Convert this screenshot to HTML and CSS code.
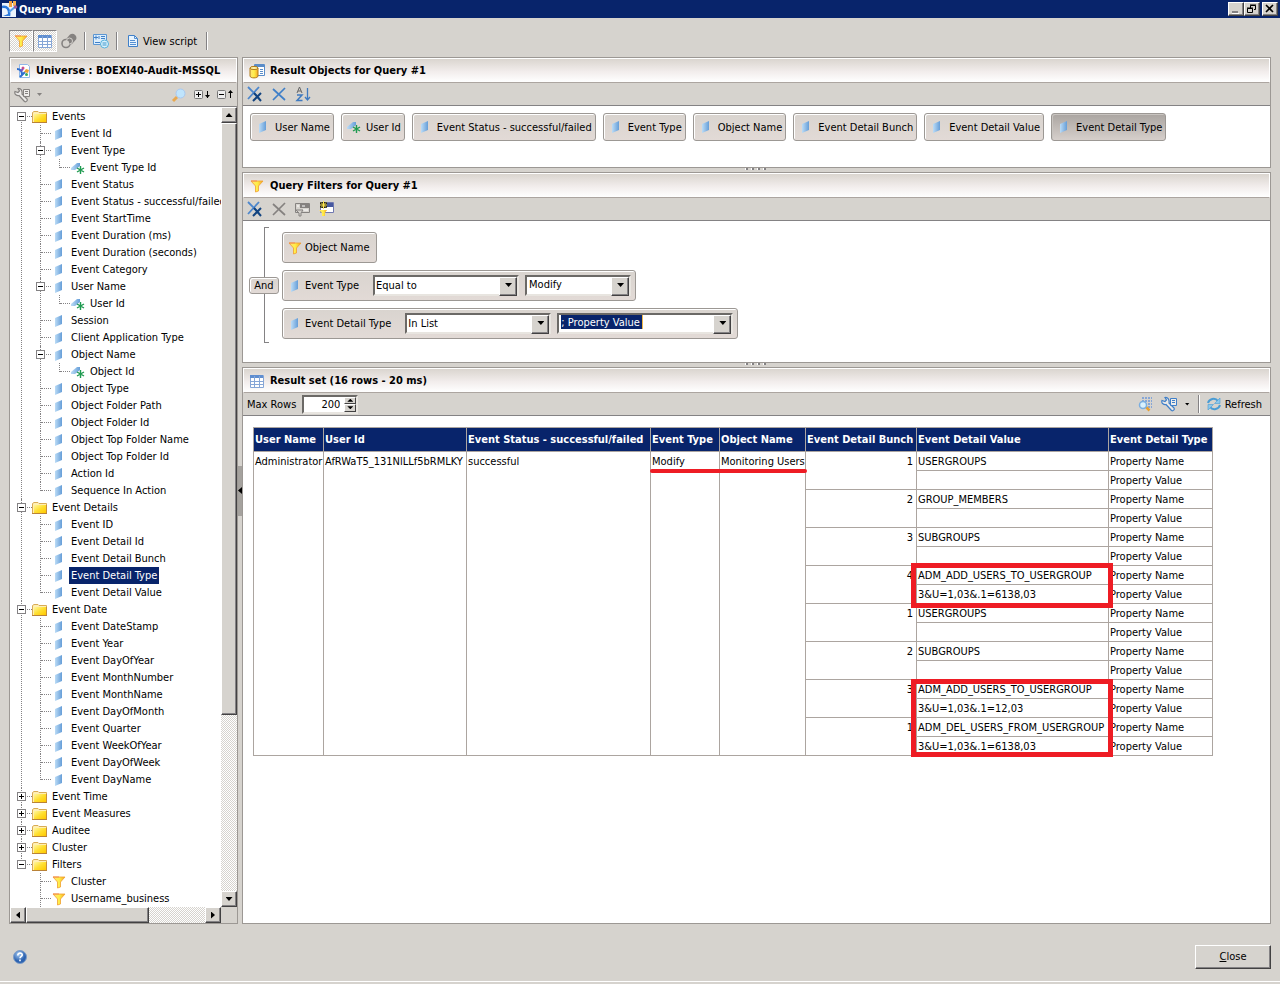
FILE: index.html
```html
<!DOCTYPE html>
<html lang="en">
<head>
  <meta charset="UTF-8" />
  <meta name="viewport" content="width=device-width, initial-scale=1" />
  <title>Query Panel</title>
  <link rel="stylesheet" href="styles.css">
</head>
<body>
  <svg class="sprite" aria-hidden="true">
    <defs>
      <linearGradient id="blue" x1="0" x2="1"><stop offset="0" stop-color="#bcdcf6"/><stop offset="1" stop-color="#669ed8"/></linearGradient>
      <linearGradient id="gold" x1="0" x2="1"><stop offset="0" stop-color="#ffdf78"/><stop offset=".5" stop-color="#fff04a"/><stop offset="1" stop-color="#f5a623"/></linearGradient>
      <linearGradient id="fold" x1="1" y1="1" x2="0" y2="0"><stop offset="0" stop-color="#ffc800"/><stop offset=".5" stop-color="#ffdf30"/><stop offset="1" stop-color="#fff6a0"/></linearGradient>
      <radialGradient id="ball" cx=".4" cy=".3"><stop offset="0" stop-color="#a8ccf4"/><stop offset="1" stop-color="#2c62b0"/></radialGradient>
    </defs>
    <symbol id="dim" viewBox="0 0 16 16"><path d="M4 5l7-3v9l-7 3z" fill="url(#blue)"/></symbol>
    <symbol id="attr" viewBox="0 0 16 16"><path d="M1 10V8l6-5h3v3l-5 4z" fill="url(#blue)"/><path d="M10.500 6v8M7 8l7 4M14 8l-7 4" stroke="#1f9a50" stroke-width="1.400"/></symbol>
    <symbol id="folder" viewBox="0 0 16 16"><path d="M.500 13V3.500L2 2.500h4l1 1h7.500V13" fill="#ffefb4" stroke="#d8ab55"/><path d="M0 13.500h15" stroke="#b98238"/><path d="M2 5h12v8H2z" fill="url(#fold)"/><path d="M14.500 5v8" stroke="#c78f3a"/></symbol>
    <symbol id="funnel" viewBox="0 0 16 16"><path d="M2 3h12l-4.500 5v5l-3 1V8z" fill="url(#gold)" stroke="#f0a030" stroke-width=".8"/><path d="M2 3h6" stroke="#f58a50"/></symbol>
    <symbol id="grid" viewBox="0 0 16 16"><path d="M1.500 2.500h13v12h-13z" fill="#fff" stroke="#86a6d6"/><path d="M1 2h13v3H1z" fill="#5f8ed0"/><path d="M2 8.500h12M2 11.500h12M5.500 3v11M10.500 3v11" stroke="#86a6d6"/></symbol>
    <symbol id="chain" viewBox="0 0 16 16"><path d="M6 5l3-3.500c3-2.500 8 1 6 5L11 11c-4 2-8-2-5-6z" fill="#858280"/><circle cx="5" cy="10.500" r="4" fill="#d6d3ce" stroke="#858280" stroke-width="1.600"/><circle cx="8.500" cy="8" r="3" fill="none" stroke="#d6d3ce"/></symbol>
    <symbol id="queryadd" viewBox="0 0 16 16"><path d="M.500 1.500h13v10H.500z" fill="#ddeefc" stroke="#5c96d2"/><path d="M1 4.500h4M3 2.500v4M6 3v3M8 3.500h4M8 5.500h4M2 9.500h5" stroke="#4080c8"/><circle cx="11.500" cy="11" r="4" fill="#d8f2fc" stroke="#57b0dc"/><path d="M9.500 10h4M9.500 12h4" stroke="#3f95cc"/></symbol>
    <symbol id="doc" viewBox="0 0 16 16"><path d="M3.500 2.500h6l3 3v8h-9z" fill="#e8f4fe" stroke="#3f7fc8"/><path d="M9.500 2.500v3h3M5 7.500h5M5 9.500h6M5 11.500h6" fill="none" stroke="#5590d2"/></symbol>
    <symbol id="universe" viewBox="0 0 16 16"><path d="M3.500 1.500h8l2 2v11h-10z" fill="#fff" stroke="#92b8e8"/><path d="M1 6c3 0 5 2 5 6M4 14l5-5" fill="none" stroke="#2f6fd0" stroke-width="2"/><circle cx="7" cy="5" r="1.500" fill="#d0508a"/><path d="M8 9l2-3 3 1-1 3z" fill="#f0a030"/><circle cx="10.500" cy="11.500" r="1.500" fill="#38a860"/><path d="M5 8l2-2" stroke="#8050c0" stroke-width="2"/></symbol>
    <symbol id="logo" viewBox="0 0 16 16"><path d="M0 2h14v14H0z" fill="#eaf2fc"/><path d="M0 6c5-1 8 2 7 9" fill="none" stroke="#2a78dc" stroke-width="2.500"/><path d="M7 11l6-5" stroke="#58a0ec" stroke-width="2"/><path d="M7 0h3v6H7z" fill="#f0a040"/><path d="M11 0h3v5h-3z" fill="#f5b050"/><circle cx="13.500" cy="6" r="1.800" fill="#a05a9c"/><path d="M1 15l5-2v2z" fill="#2a78dc"/></symbol>
    <symbol id="wrench" viewBox="0 0 16 16"><path d="M4 1.500L5.500 4 4 5.500 1 4.500c-1 3 2 4.500 4 4l5.500 6c1.500 1 3.500-1 2.500-2.500l-5-5C8.500 4 7 1 4 1.500z" fill="#fff" fill-opacity=".5" stroke="currentColor" stroke-width="1.200"/><path d="M9.500 2.500h6v7h-6zM11 4.500h3M11 6.500h3" fill="#fff" fill-opacity=".6" stroke="currentColor"/></symbol>
    <symbol id="lens" viewBox="0 0 16 16"><path d="M2 14l4-4" stroke="#e8a850" stroke-width="3"/><circle cx="9.500" cy="6.500" r="4.500" fill="#bfe4fc" stroke="#a9c8f0"/></symbol>
    <symbol id="expand" viewBox="0 0 16 16"><rect x=".500" y="3.500" width="8" height="8" rx="1" fill="#eee" stroke="#777"/><path d="M2 7.500h5M4.500 5v5M13.500 4v7" stroke="#000"/><path d="M11 8h5l-2.500 3z"/></symbol>
    <symbol id="collapse" viewBox="0 0 16 16"><rect x=".500" y="3.500" width="8" height="8" rx="1" fill="#eee" stroke="#777"/><path d="M2 7.500h5M13.500 4v7" stroke="#000"/><path d="M11 6h5l-2.500-3z"/></symbol>
    <symbol id="result" viewBox="0 0 16 16"><path d="M5.500 1.500h10v11h-10z" fill="#fff" stroke="#5a8cc8"/><path d="M6 3h9" stroke="#5a8cc8" stroke-width="2"/><path d="M11 6.500h3M11 8.500h3M11 10.500h3" stroke="#5a8cc8"/><path d="M1 5v8c0 2.500 8 2.500 8 0V5z" fill="url(#gold)" stroke="#b07a18"/><ellipse cx="5" cy="5" rx="4" ry="1.600" fill="#fff0a0" stroke="#b07a18"/></symbol>
    <symbol id="removeall" viewBox="0 0 16 16"><path d="M1 1l11 11M12 1L1 13" stroke="#4c86cc" stroke-width="1.800"/><path d="M7 7l7 8M14 7l-8 8" stroke="#12437f" stroke-width="2"/></symbol>
    <symbol id="remove" viewBox="0 0 16 16"><path d="M2 3l12 11M14 2L2 14" stroke="currentColor" stroke-width="1.700"/></symbol>
    <symbol id="sort" viewBox="0 0 16 16"><path d="M2 7l2.500-6L7 7M3 5h3" fill="none" stroke="#666"/><path d="M2 9h5l-5 5.500h5.500" fill="none" stroke="#3f7ac0" stroke-width="1.500"/><path d="M12.500 2v11M10 11l2.500 3 2.500-3" fill="none" stroke="#3f7ac0" stroke-width="1.300"/></symbol>
    <symbol id="subq" viewBox="0 0 16 16"><path d="M.500 2.500h14v9h-14z" fill="#d6d3ce" stroke="#858280"/><path d="M5 3h9v4H5z" fill="#858280"/><path d="M7 5h3M2 5h2M8 9h5" stroke="#fff"/><path d="M1 9h7l-2 3v3H4v-3z" fill="#d6d3ce" stroke="#858280"/></symbol>
    <symbol id="addsub" viewBox="0 0 16 16"><path d="M1.500 1.500h13v10h-13z" fill="#fff" stroke="#7078b0"/><path d="M8 2h6v4H8z" fill="#4658a0"/><path d="M0 9h8l-2 3v3H3v-3z" fill="url(#gold)"/><path d="M1 1h7v6H1z" fill="#222"/><path d="M4.500 0v8M1 4h7M2 1.500l5 5M7 1.500l-5 5" stroke="#ffe850"/></symbol>
    <symbol id="findgrid" viewBox="0 0 16 16"><path d="M5 2h10M5 5h10M5 8h10M5 11h10" stroke="#86a6d6" stroke-width="2" stroke-dasharray="2 1"/><path d="M9 11l3.500 3.500" stroke="#e8a030" stroke-width="2.500"/><circle cx="6" cy="9" r="3.500" fill="#d8f0fc" stroke="#7aaee0" stroke-width="1.500"/></symbol>
    <symbol id="refresh" viewBox="0 0 16 16"><path d="M2 7c1-4 7-6 10-2M14 9c-1 4-7 6-10 2" fill="none" stroke="#4a9cd4" stroke-width="2"/><path d="M14 2v5.500H8.500zM2 14V8.500h5.500z" fill="#8cc8ec" stroke="#4a9cd4" stroke-width=".6"/></symbol>
    <symbol id="help" viewBox="0 0 16 16"><circle cx="8" cy="8" r="6.500" fill="url(#ball)" stroke="#7c9cc8"/><path d="M5.800 6.500c0-3.300 4.800-2.800 4.400-.4-.2 1.300-2.200 1.300-2.200 3.200M8 10.500v1.700" fill="none" stroke="#fff" stroke-width="1.600"/></symbol>
  </svg>

  <header class="titlebar">
    <svg class="icon"><use href="#logo"/></svg>
    <h1>Query Panel</h1>
    <button class="win" aria-label="Minimize"><svg width="10" height="10"><path d="M1 8h6" stroke="#848284" stroke-width="2"/><path d="M1 9.500h7" stroke="#fff"/></svg></button>
    <button class="win" aria-label="Restore"><svg width="10" height="10"><path d="M3.500 4V1.500h5v4H7M3 1h6M.500 4.500h5v4h-5zM0 4h6" fill="none" stroke="#000"/></svg></button>
    <button class="win win-close" aria-label="Close window"><svg width="10" height="10"><path d="M1 1l7 7M8 1L1 8" stroke="#000" stroke-width="1.600"/></svg></button>
  </header>

  <nav class="toolbar">
    <button class="tool pressed" aria-label="Filters"><svg class="icon"><use href="#funnel"/></svg></button>
    <button class="tool pressed" aria-label="Data preview"><svg class="icon"><use href="#grid"/></svg></button>
    <button class="tool" aria-label="Combined query"><svg class="icon"><use href="#chain"/></svg></button>
    <span class="sep"></span>
    <button class="tool" aria-label="Query properties"><svg class="icon"><use href="#queryadd"/></svg></button>
    <span class="sep"></span>
    <button class="tool-text"><svg class="icon"><use href="#doc"/></svg>View script</button>
    <span class="sep sep-last"></span>
  </nav>

  <main class="workspace">
    <aside class="panel universe">
      <h2 class="panel-head"><svg class="icon"><use href="#universe"/></svg>Universe : BOEXI40-Audit-MSSQL</h2>
      <div class="panel-tools">
        <button class="mini muted" aria-label="Options"><svg class="icon"><use href="#wrench"/></svg></button>
        <span class="caret muted"></span>
        <span class="grow"></span>
        <button class="mini" aria-label="Search"><svg class="icon"><use href="#lens"/></svg></button>
        <button class="mini" aria-label="Expand all"><svg class="icon"><use href="#expand"/></svg></button>
        <button class="mini" aria-label="Collapse all"><svg class="icon"><use href="#collapse"/></svg></button>
      </div>
      <div class="tree-area">
        <ul class="tree">
          <li><div class="row"><button class="exp" aria-label="Collapse Events"></button><svg class="icon"><use href="#folder"/></svg><span>Events</span></div>
            <ul>
              <li><div class="row"><svg class="icon"><use href="#dim"/></svg><span>Event Id</span></div></li>
              <li><div class="row"><button class="exp" aria-label="Collapse Event Type"></button><svg class="icon"><use href="#dim"/></svg><span>Event Type</span></div>
                <ul><li><div class="row"><svg class="icon"><use href="#attr"/></svg><span>Event Type Id</span></div></li></ul>
              </li>
              <li><div class="row"><svg class="icon"><use href="#dim"/></svg><span>Event Status</span></div></li>
              <li><div class="row"><svg class="icon"><use href="#dim"/></svg><span>Event Status - successful/failed</span></div></li>
              <li><div class="row"><svg class="icon"><use href="#dim"/></svg><span>Event StartTime</span></div></li>
              <li><div class="row"><svg class="icon"><use href="#dim"/></svg><span>Event Duration (ms)</span></div></li>
              <li><div class="row"><svg class="icon"><use href="#dim"/></svg><span>Event Duration (seconds)</span></div></li>
              <li><div class="row"><svg class="icon"><use href="#dim"/></svg><span>Event Category</span></div></li>
              <li><div class="row"><button class="exp" aria-label="Collapse User Name"></button><svg class="icon"><use href="#dim"/></svg><span>User Name</span></div>
                <ul><li><div class="row"><svg class="icon"><use href="#attr"/></svg><span>User Id</span></div></li></ul>
              </li>
              <li><div class="row"><svg class="icon"><use href="#dim"/></svg><span>Session</span></div></li>
              <li><div class="row"><svg class="icon"><use href="#dim"/></svg><span>Client Application Type</span></div></li>
              <li><div class="row"><button class="exp" aria-label="Collapse Object Name"></button><svg class="icon"><use href="#dim"/></svg><span>Object Name</span></div>
                <ul><li><div class="row"><svg class="icon"><use href="#attr"/></svg><span>Object Id</span></div></li></ul>
              </li>
              <li><div class="row"><svg class="icon"><use href="#dim"/></svg><span>Object Type</span></div></li>
              <li><div class="row"><svg class="icon"><use href="#dim"/></svg><span>Object Folder Path</span></div></li>
              <li><div class="row"><svg class="icon"><use href="#dim"/></svg><span>Object Folder Id</span></div></li>
              <li><div class="row"><svg class="icon"><use href="#dim"/></svg><span>Object Top Folder Name</span></div></li>
              <li><div class="row"><svg class="icon"><use href="#dim"/></svg><span>Object Top Folder Id</span></div></li>
              <li><div class="row"><svg class="icon"><use href="#dim"/></svg><span>Action Id</span></div></li>
              <li><div class="row"><svg class="icon"><use href="#dim"/></svg><span>Sequence In Action</span></div></li>
            </ul>
          </li>
          <li><div class="row"><button class="exp" aria-label="Collapse Event Details"></button><svg class="icon"><use href="#folder"/></svg><span>Event Details</span></div>
            <ul>
              <li><div class="row"><svg class="icon"><use href="#dim"/></svg><span>Event ID</span></div></li>
              <li><div class="row"><svg class="icon"><use href="#dim"/></svg><span>Event Detail Id</span></div></li>
              <li><div class="row"><svg class="icon"><use href="#dim"/></svg><span>Event Detail Bunch</span></div></li>
              <li><div class="row selected"><svg class="icon"><use href="#dim"/></svg><span>Event Detail Type</span></div></li>
              <li><div class="row"><svg class="icon"><use href="#dim"/></svg><span>Event Detail Value</span></div></li>
            </ul>
          </li>
          <li><div class="row"><button class="exp" aria-label="Collapse Event Date"></button><svg class="icon"><use href="#folder"/></svg><span>Event Date</span></div>
            <ul>
              <li><div class="row"><svg class="icon"><use href="#dim"/></svg><span>Event DateStamp</span></div></li>
              <li><div class="row"><svg class="icon"><use href="#dim"/></svg><span>Event Year</span></div></li>
              <li><div class="row"><svg class="icon"><use href="#dim"/></svg><span>Event DayOfYear</span></div></li>
              <li><div class="row"><svg class="icon"><use href="#dim"/></svg><span>Event MonthNumber</span></div></li>
              <li><div class="row"><svg class="icon"><use href="#dim"/></svg><span>Event MonthName</span></div></li>
              <li><div class="row"><svg class="icon"><use href="#dim"/></svg><span>Event DayOfMonth</span></div></li>
              <li><div class="row"><svg class="icon"><use href="#dim"/></svg><span>Event Quarter</span></div></li>
              <li><div class="row"><svg class="icon"><use href="#dim"/></svg><span>Event WeekOfYear</span></div></li>
              <li><div class="row"><svg class="icon"><use href="#dim"/></svg><span>Event DayOfWeek</span></div></li>
              <li><div class="row"><svg class="icon"><use href="#dim"/></svg><span>Event DayName</span></div></li>
            </ul>
          </li>
          <li><div class="row"><button class="exp closed" aria-label="Expand Event Time"></button><svg class="icon"><use href="#folder"/></svg><span>Event Time</span></div></li>
          <li><div class="row"><button class="exp closed" aria-label="Expand Event Measures"></button><svg class="icon"><use href="#folder"/></svg><span>Event Measures</span></div></li>
          <li><div class="row"><button class="exp closed" aria-label="Expand Auditee"></button><svg class="icon"><use href="#folder"/></svg><span>Auditee</span></div></li>
          <li><div class="row"><button class="exp closed" aria-label="Expand Cluster"></button><svg class="icon"><use href="#folder"/></svg><span>Cluster</span></div></li>
          <li><div class="row"><button class="exp" aria-label="Collapse Filters"></button><svg class="icon"><use href="#folder"/></svg><span>Filters</span></div>
            <ul>
              <li><div class="row"><svg class="icon"><use href="#funnel"/></svg><span>Cluster</span></div></li>
              <li class="more"><div class="row"><svg class="icon"><use href="#funnel"/></svg><span>Username_business</span></div></li>
            </ul>
          </li>
        </ul>
        <div class="vscroll">
          <button class="sb" aria-label="Scroll up"><i class="up"></i></button>
          <div class="thumb"></div>
          <div class="track"></div>
          <button class="sb" aria-label="Scroll down"><i class="down"></i></button>
        </div>
        <div class="hscroll">
          <button class="sb" aria-label="Scroll left"><i class="left"></i></button>
          <div class="thumb"></div>
          <div class="track"></div>
          <button class="sb" aria-label="Scroll right"><i class="right"></i></button>
        </div>
      </div>
    </aside>

    <div class="divider"><button class="handle" aria-label="Collapse panel"><i class="left"></i></button></div>

    <div class="query">
      <section class="panel">
        <h2 class="panel-head"><svg class="icon"><use href="#result"/></svg>Result Objects for Query #1</h2>
        <div class="panel-tools">
          <button class="mini" aria-label="Remove all"><svg class="icon"><use href="#removeall"/></svg></button>
          <button class="mini blue" aria-label="Remove"><svg class="icon"><use href="#remove"/></svg></button>
          <button class="mini" aria-label="Sort"><svg class="icon"><use href="#sort"/></svg></button>
        </div>
        <div class="chips">
          <button class="chip"><svg class="icon"><use href="#dim"/></svg>User Name</button>
          <button class="chip"><svg class="icon"><use href="#attr"/></svg>User Id</button>
          <button class="chip"><svg class="icon"><use href="#dim"/></svg>Event Status - successful/failed</button>
          <button class="chip"><svg class="icon"><use href="#dim"/></svg>Event Type</button>
          <button class="chip"><svg class="icon"><use href="#dim"/></svg>Object Name</button>
          <button class="chip"><svg class="icon"><use href="#dim"/></svg>Event Detail Bunch</button>
          <button class="chip"><svg class="icon"><use href="#dim"/></svg>Event Detail Value</button>
          <button class="chip active"><svg class="icon"><use href="#dim"/></svg>Event Detail Type</button>
        </div>
      </section>

      <div class="splitter"></div>

      <section class="panel">
        <h2 class="panel-head"><svg class="icon"><use href="#funnel"/></svg>Query Filters for Query #1</h2>
        <div class="panel-tools">
          <button class="mini" aria-label="Remove all filters"><svg class="icon"><use href="#removeall"/></svg></button>
          <button class="mini muted" aria-label="Remove filter"><svg class="icon"><use href="#remove"/></svg></button>
          <button class="mini" aria-label="Nest filter"><svg class="icon"><use href="#subq"/></svg></button>
          <button class="mini" aria-label="Add subquery"><svg class="icon"><use href="#addsub"/></svg></button>
        </div>
        <div class="filters">
          <div class="bracket"><button class="and">And</button></div>
          <div class="filter-list">
            <div class="filter"><svg class="icon"><use href="#funnel"/></svg><span>Object Name</span></div>
            <div class="filter">
              <svg class="icon"><use href="#dim"/></svg><label for="op1">Event Type</label>
              <span class="combo operator"><select id="op1"><option>Equal to</option></select></span>
              <span class="combo value"><input type="text" value="Modify" aria-label="Event Type value"></span>
            </div>
            <div class="filter">
              <svg class="icon"><use href="#dim"/></svg><label for="op2">Event Detail Type</label>
              <span class="combo operator"><select id="op2"><option>In List</option></select></span>
              <span class="combo value wide"><input class="marked" type="text" value="; Property Value" aria-label="Event Detail Type value"></span>
            </div>
          </div>
        </div>
      </section>

      <div class="splitter"></div>

      <section class="panel results">
        <h2 class="panel-head"><svg class="icon"><use href="#grid"/></svg>Result set (16 rows - 20 ms)</h2>
        <div class="panel-tools">
          <label for="max-rows">Max Rows</label>
          <span class="spinner">
            <input id="max-rows" type="text" value="200">
            <span class="steps"><button aria-label="More"><i class="up"></i></button><button aria-label="Fewer"><i class="down"></i></button></span>
          </span>
          <span class="grow"></span>
          <button class="mini" aria-label="Find"><svg class="icon"><use href="#findgrid"/></svg></button>
          <button class="mini blue" aria-label="Settings"><svg class="icon"><use href="#wrench"/></svg></button>
          <span class="caret"></span>
          <span class="sep"></span>
          <button class="tool-text"><svg class="icon"><use href="#refresh"/></svg>Refresh</button>
        </div>
        <div class="sheet">
          <div class="table-wrap">
            <table>
              <colgroup><col class="c-user"><col class="c-id"><col class="c-status"><col class="c-type"><col class="c-object"><col class="c-bunch"><col class="c-value"><col class="c-detail"></colgroup>
              <thead>
                <tr><th>User Name</th><th>User Id</th><th>Event Status - successful/failed</th><th>Event Type</th><th>Object Name</th><th>Event Detail Bunch</th><th>Event Detail Value</th><th>Event Detail Type</th></tr>
              </thead>
              <tbody>
                <tr><td rowspan="16">Administrator</td><td rowspan="16">AfRWaT5_131NlLLf5bRMLKY</td><td rowspan="16">successful</td><td rowspan="16">Modify</td><td rowspan="16">Monitoring Users</td><td rowspan="2" class="num">1</td><td>USERGROUPS</td><td>Property Name</td></tr>
                <tr><td></td><td>Property Value</td></tr>
                <tr><td rowspan="2" class="num">2</td><td>GROUP_MEMBERS</td><td>Property Name</td></tr>
                <tr><td></td><td>Property Value</td></tr>
                <tr><td rowspan="2" class="num">3</td><td>SUBGROUPS</td><td>Property Name</td></tr>
                <tr><td></td><td>Property Value</td></tr>
                <tr><td rowspan="2" class="num">4</td><td>ADM_ADD_USERS_TO_USERGROUP</td><td>Property Name</td></tr>
                <tr><td>3&amp;U=1,03&amp;.1=6138,03</td><td>Property Value</td></tr>
                <tr><td rowspan="2" class="num">1</td><td>USERGROUPS</td><td>Property Name</td></tr>
                <tr><td></td><td>Property Value</td></tr>
                <tr><td rowspan="2" class="num">2</td><td>SUBGROUPS</td><td>Property Name</td></tr>
                <tr><td></td><td>Property Value</td></tr>
                <tr><td rowspan="2" class="num">3</td><td>ADM_ADD_USERS_TO_USERGROUP</td><td>Property Name</td></tr>
                <tr><td>3&amp;U=1,03&amp;.1=12,03</td><td>Property Value</td></tr>
                <tr><td rowspan="2" class="num">1</td><td>ADM_DEL_USERS_FROM_USERGROUP</td><td>Property Name</td></tr>
                <tr><td>3&amp;U=1,03&amp;.1=6138,03</td><td>Property Value</td></tr>
              </tbody>
            </table>
            <div class="mark underline"></div>
            <div class="mark box first"></div>
            <div class="mark box second"></div>
          </div>
        </div>
      </section>
    </div>
  </main>

  <footer class="footer">
    <button class="mini" aria-label="Help"><svg class="icon"><use href="#help"/></svg></button>
    <button class="close"><u>C</u>lose</button>
  </footer>
</body>
</html>
```
FILE: styles.css
```css
* {
  box-sizing: border-box;
}
body {
  margin: 0;
  min-height: 100vh;
  display: flex;
  flex-direction: column;
  background: #d6d3ce;
  color: #000;
  font-family: Tahoma, "DejaVu Sans Condensed", "DejaVu Sans", sans-serif;
  font-stretch: condensed;
  font-size: 11px;
  line-height: 17px;
}
button,
input,
select {
  font: inherit;
  color: inherit;
  margin: 0;
  padding: 0;
  border: 0;
  border-radius: 0;
  background: none;
}
h1,
h2,
ul {
  margin: 0;
  padding: 0;
  list-style: none;
}
.sprite {
  position: absolute;
  width: 0;
  height: 0;
}
.icon {
  width: 16px;
  height: 16px;
  flex: none;
  display: block;
}
.grow {
  flex: 1;
}

/* title bar */
.titlebar {
  display: flex;
  align-items: center;
  height: 18px;
  padding: 0 2px;
  background: #08246b;
  color: #fff;
}
.titlebar h1 {
  flex: 1;
  font-size: 11px;
  padding-left: 1px;
}
.win {
  width: 16px;
  height: 14px;
  padding: 1px 2px;
  background: #d6d3ce;
  border: 1px solid;
  border-color: #fff #424142 #424142 #fff;
  box-shadow: inset -1px -1px #848284;
}
.win svg {
  display: block;
}
.win-close {
  margin-left: 2px;
}

/* top toolbar */
.toolbar {
  display: flex;
  align-items: center;
  height: 39px;
  padding: 7px 9px 0;
}
.tool {
  width: 24px;
  height: 22px;
  display: flex;
  align-items: center;
  justify-content: center;
}
.pressed {
  border: 1px solid;
  border-color: #848284 #fff #fff #848284;
  background: repeating-conic-gradient(#fff 0 25%, #d6d3ce 0 50%) 0 0 / 2px 2px;
}
.sep {
  width: 2px;
  height: 18px;
  margin: 0 3px;
  border-left: 1px solid #848284;
  border-right: 1px solid #fff;
}
.sep-last {
  margin-left: 9px;
}
.tool-text {
  display: flex;
  align-items: center;
  gap: 2px;
  padding-left: 4px;
}

/* panels */
.workspace {
  flex: 1;
  display: flex;
  padding: 0 9px;
}
.panel {
  display: flex;
  flex-direction: column;
  border: 1px solid #9c9894;
  background: #fff;
}
.panel-head {
  display: flex;
  align-items: center;
  gap: 5px;
  height: 25px;
  padding-left: 5px;
  font-size: 11px;
  border: 1px solid #fff;
  border-bottom: 1px solid #aca5a0;
  background: linear-gradient(#dad5cf, #f2edec 55%, #fff);
  white-space: nowrap;
}
.panel-tools {
  display: flex;
  align-items: center;
  height: 23px;
  padding: 0 4px;
  gap: 8px;
  background: #d6d3ce;
  border-bottom: 1px solid #848284;
}
.mini {
  display: block;
}
.muted {
  color: #858280;
}
.blue {
  color: #3f7fc8;
}
.caret {
  width: 5px;
  height: 3px;
  background: currentColor;
  clip-path: polygon(0 0, 100% 0, 50% 100%);
}

/* universe tree */
.universe {
  width: 229px;
}
.universe .panel-head {
  gap: 4px;
}
.universe .panel-tools {
  height: 24px;
  gap: 7px;
}
.tree-area {
  flex: 1;
  display: grid;
  grid-template-columns: 1fr 16px;
  grid-template-rows: 1fr 16px;
  background: #d6d3ce;
}
.tree {
  padding: 1px 0 0 7px;
  background: #fff;
  overflow: hidden;
}
.tree ul {
  margin-left: 19px;
}
.tree li {
  position: relative;
}
.tree li::before {
  content: "";
  position: absolute;
  top: 0;
  bottom: 0;
  left: 4px;
  border-left: 1px dotted #848284;
}
.tree li:last-child::before {
  bottom: auto;
  height: 9px;
}
.tree li.more::before {
  height: 17px;
}
.tree > li:first-child::before {
  top: 9px;
}
.row {
  position: relative;
  display: flex;
  align-items: center;
  height: 17px;
  padding-left: 15px;
  white-space: nowrap;
}
.row::before {
  content: "";
  position: absolute;
  left: 5px;
  width: 10px;
  top: 8px;
  border-top: 1px dotted #848284;
}
.row span {
  padding: 0 2px;
  margin-left: 2px;
}
.selected span {
  background: #08246b;
  color: #fff;
}
.exp {
  position: absolute;
  left: 0;
  width: 9px;
  height: 9px;
  border: 1px solid #848284;
  background: linear-gradient(#000, #000) center / 5px 1px no-repeat #fff;
}
.closed {
  background: linear-gradient(#000, #000) center / 5px 1px no-repeat, linear-gradient(#000, #000) center / 1px 5px no-repeat, #fff;
}

/* scroll bars */
.vscroll,
.hscroll {
  display: flex;
  background: repeating-conic-gradient(#fff 0 25%, #d6d3ce 0 50%) 0 0 / 2px 2px;
}
.vscroll {
  flex-direction: column;
}
.sb,
.thumb {
  display: flex;
  align-items: center;
  justify-content: center;
  background: #d6d3ce;
  border: 1px solid;
  border-color: #fff #424142 #424142 #fff;
  box-shadow: inset -1px -1px #848284;
}
.sb {
  width: 16px;
  height: 16px;
}
.vscroll .thumb {
  flex: 592;
}
.vscroll .track {
  flex: 176;
}
.hscroll .thumb {
  flex: 122;
}
.hscroll .track {
  flex: 57;
}
.up,
.down,
.left,
.right {
  background: #000;
}
.up,
.down {
  width: 7px;
  height: 4px;
}
.left,
.right {
  width: 4px;
  height: 7px;
}
.up {
  clip-path: polygon(50% 0, 100% 100%, 0 100%);
}
.down {
  clip-path: polygon(0 0, 100% 0, 50% 100%);
}
.left {
  clip-path: polygon(100% 0, 100% 100%, 0 50%);
}
.right {
  clip-path: polygon(0 0, 100% 50%, 0 100%);
}

.divider {
  width: 4px;
  display: flex;
  align-items: center;
}
.handle {
  width: 4px;
  height: 50px;
  background: #a5a29e;
}
.handle .left {
  display: block;
}

/* query side */
.query {
  flex: 1;
  min-width: 0;
  display: flex;
  flex-direction: column;
}
.splitter {
  height: 4px;
  display: flex;
  justify-content: center;
}
.splitter::after {
  content: "";
  width: 24px;
  height: 2px;
  background: repeating-linear-gradient(90deg, #fff 0 1px, #848284 1px 3px, transparent 3px 6px);
}
.chips {
  display: flex;
  gap: 7px;
  height: 61px;
  padding: 7px;
}
.chip {
  display: flex;
  align-items: center;
  gap: 4px;
  height: 28px;
  padding: 0 3px 0 4px;
  white-space: nowrap;
}
.chip,
.filter,
.and {
  border: 1px solid #9c9894;
  border-radius: 3px;
  background: linear-gradient(#d9d4cf, #e2dad6);
  box-shadow: inset 1px 1px #fff;
}
.active {
  background: linear-gradient(#aaa5a1, #d6cfcb);
  box-shadow: inset 1px 1px #c8c4c0;
}
.filters {
  display: flex;
  height: 141px;
  padding: 6px;
}
.bracket {
  position: relative;
  width: 30px;
  height: 116px;
  display: flex;
  align-items: center;
}
.bracket::before {
  content: "";
  position: absolute;
  left: 15px;
  width: 4px;
  top: 0;
  bottom: 0;
  border: 1px solid #848284;
  border-right: 0;
}
.and {
  position: relative;
  width: 30px;
  height: 17px;
  line-height: 15px;
}
.filter-list {
  display: flex;
  flex-direction: column;
  align-items: flex-start;
  gap: 7px;
  padding: 5px 0 0 3px;
}
.filter {
  display: flex;
  align-items: center;
  height: 31px;
  padding: 0 4px;
}
.filter .icon {
  margin-right: 2px;
}
.filter > span:not(.combo) {
  padding-right: 2px;
}
.filter label {
  margin-right: 14px;
}
.combo {
  position: relative;
  display: flex;
  height: 21px;
  background: #fff;
  border: 2px solid;
  border-color: #6b6966 #e8e5e0 #e8e5e0 #6b6966;
}
.combo::before {
  content: "";
  position: absolute;
  right: 0;
  top: 0;
  width: 16px;
  height: 17px;
  background: #d6d3ce;
  border: 1px solid;
  border-color: #fff #424142 #424142 #fff;
  box-shadow: inset -1px -1px #848284;
  pointer-events: none;
}
.combo::after {
  content: "";
  position: absolute;
  right: 5px;
  top: 6px;
  width: 7px;
  height: 4px;
  background: #000;
  clip-path: polygon(0 0, 100% 0, 50% 100%);
  pointer-events: none;
}
.combo select {
  appearance: none;
  width: 100%;
  padding-left: 1px;
}
.combo input {
  width: 80px;
  height: 14px;
  margin-left: 2px;
}
.operator {
  width: 146px;
  margin-right: 6px;
}
.value {
  width: 106px;
}
.wide {
  width: 176px;
}
.combo .marked {
  width: 82px;
  background: #08246b;
  color: #fff;
  border-right: 1px solid #f0b848;
}

/* result set */
.results {
  flex: 1;
}
.spinner {
  display: flex;
  width: 56px;
  height: 19px;
  margin-left: -2px;
  background: #fff;
  border: 2px solid;
  border-color: #6b6966 #e8e5e0 #e8e5e0 #6b6966;
}
.spinner input {
  flex: 1;
  min-width: 0;
  padding-right: 4px;
  text-align: right;
}
.steps {
  display: flex;
  flex-direction: column;
  width: 12px;
}
.steps button {
  flex: 1;
  display: flex;
  align-items: center;
  justify-content: center;
  background: #d6d3ce;
  border: 1px solid;
  border-color: #fff #424142 #424142 #fff;
}
.steps i {
  width: 6px;
  height: 3px;
}
.results .sep {
  margin: 0 -6px 0 0;
}
.results .tool-text {
  gap: 3px;
  padding-right: 4px;
}
.sheet {
  flex: 1;
  padding: 11px 10px;
}
.table-wrap {
  position: relative;
  width: 960px;
}
table {
  width: 960px;
  table-layout: fixed;
  border-collapse: collapse;
  line-height: 16px;
}
th,
td {
  height: 19px;
  padding: 2px 1px 0;
  border: 1px solid #aca5a0;
  text-align: left;
  vertical-align: top;
  white-space: nowrap;
}
th {
  height: 24px;
  line-height: 20px;
  background: #08246b;
  color: #fff;
}
.num {
  padding-right: 3px;
  text-align: right;
}
.c-user { width: 70px; }
.c-id { width: 143px; }
.c-status { width: 184px; }
.c-type { width: 69px; }
.c-object { width: 86px; }
.c-bunch { width: 111px; }
.c-value { width: 192px; }
.c-detail { width: 104px; }

/* red annotations over the table */
.mark {
  position: absolute;
  pointer-events: none;
}
.underline {
  left: 397px;
  top: 42px;
  width: 157px;
  height: 4px;
  border-radius: 2px;
  background: #ee1c24;
}
.box {
  left: 658px;
  width: 202px;
  border: 5px solid #ee1c24;
}
.first {
  top: 136px;
  height: 45px;
}
.second {
  top: 252px;
  height: 78px;
}

/* footer */
.footer {
  display: flex;
  align-items: center;
  justify-content: space-between;
  height: 58px;
  margin-bottom: 2px;
  padding: 8px 9px 0 12px;
  border-bottom: 1px solid #fff;
}
.close {
  width: 76px;
  height: 24px;
  border: 1px solid;
  border-color: #fff #424142 #424142 #fff;
  box-shadow: inset -1px -1px #848284;
}
```
